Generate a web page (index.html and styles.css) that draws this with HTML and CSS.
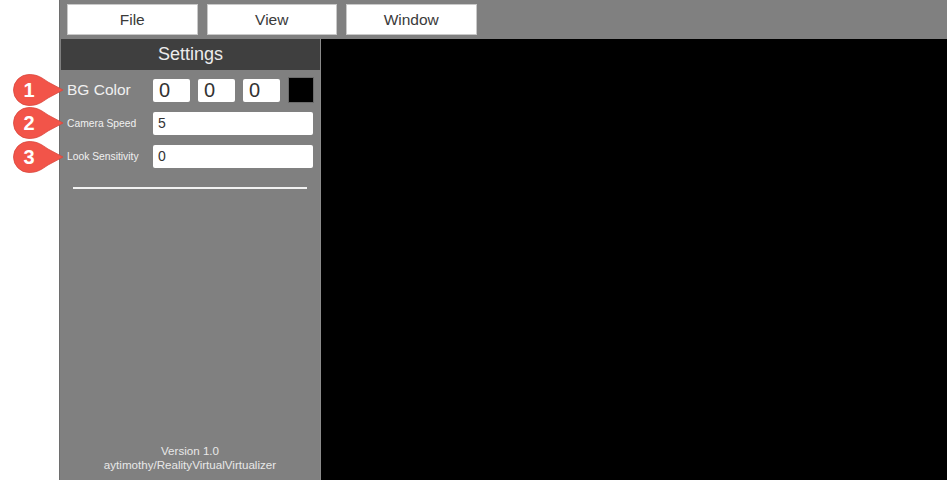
FILE: index.html
```html
<!DOCTYPE html>
<html>
<head>
<meta charset="utf-8">
<link rel="stylesheet" href="styles.css">
</head>
<body>
<div class="app">
  <div class="gutter"></div>
  <div class="main">
    <div class="menubar">
      <div class="menu-btn">File</div>
      <div class="menu-btn">View</div>
      <div class="menu-btn">Window</div>
    </div>
    <div class="content">
      <div class="panel">
        <div class="panel-title">Settings</div>
        <div class="rows">
          <div class="row">
            <div class="label big">BG Color</div>
            <div class="field small">0</div>
            <div class="field small">0</div>
            <div class="field small">0</div>
            <div class="swatch"></div>
          </div>
          <div class="row">
            <div class="label">Camera Speed</div>
            <div class="field wide">5</div>
          </div>
          <div class="row">
            <div class="label">Look Sensitivity</div>
            <div class="field wide">0</div>
          </div>
        </div>
        <div class="divider"></div>
        <div class="spacer"></div>
        <div class="footer">Version 1.0<br>aytimothy/RealityVirtualVirtualizer</div>
      </div>
      <div class="viewport"></div>
    </div>
  </div>
</div>
<div class="callout c1"><svg width="52" height="34" viewBox="0 0 52 34"><path d="M17 1.5 C26 1.5 30 5 36 9 L51 17 L36 25 C30 29 26 32.5 17 32.5 A15.5 15.5 0 0 1 17 1.5 Z" fill="#f25449" stroke="#d9463c" stroke-width="0.8"/></svg><span>1</span></div>
<div class="callout c2"><svg width="52" height="34" viewBox="0 0 52 34"><path d="M17 1.5 C26 1.5 30 5 36 9 L51 17 L36 25 C30 29 26 32.5 17 32.5 A15.5 15.5 0 0 1 17 1.5 Z" fill="#f25449" stroke="#d9463c" stroke-width="0.8"/></svg><span>2</span></div>
<div class="callout c3"><svg width="52" height="34" viewBox="0 0 52 34"><path d="M17 1.5 C26 1.5 30 5 36 9 L51 17 L36 25 C30 29 26 32.5 17 32.5 A15.5 15.5 0 0 1 17 1.5 Z" fill="#f25449" stroke="#d9463c" stroke-width="0.8"/></svg><span>3</span></div>
</body>
</html>
```
FILE: styles.css
```css
html, body {
  margin: 0;
  padding: 0;
  background: #ffffff;
  font-family: "Liberation Sans", Arial, sans-serif;
}
.app {
  display: flex;
  width: 947px;
  height: 480px;
  overflow: hidden;
}
.gutter {
  width: 59px;
  flex: none;
  background: #ffffff;
}
.main {
  flex: 1;
  display: flex;
  flex-direction: column;
  background: #808080;
  border-left: 1px solid #6e6e6e;
}
.menubar {
  height: 39px;
  flex: none;
  display: flex;
  align-items: flex-start;
  gap: 9px;
  padding: 4px 0 0 7px;
  box-sizing: border-box;
}
.menu-btn {
  width: 130.5px;
  height: 31px;
  background: #ffffff;
  border: 1px solid #c9c9c9;
  box-sizing: border-box;
  display: flex;
  align-items: center;
  justify-content: center;
  font-size: 15.5px;
  color: #3a3a3a;
}
.content {
  flex: 1;
  display: flex;
}
.panel {
  width: 260px;
  flex: none;
  display: flex;
  flex-direction: column;
  background: #808080;
}
.panel-title {
  height: 31px;
  margin-left: 1px;
  background: #3f3f3f;
  color: #ececec;
  font-size: 18px;
  display: flex;
  align-items: center;
  justify-content: center;
}
.rows {
  display: flex;
  flex-direction: column;
  padding: 8px 0 0 7px;
  gap: 9px;
}
.row {
  display: flex;
  align-items: center;
  height: 24px;
}
.label {
  width: 86px;
  flex: none;
  color: #f0f0f0;
  font-size: 10.3px;
}
.label.big {
  font-size: 15.5px;
}
.field {
  height: 23px;
  background: #ffffff;
  border-radius: 2px;
  box-sizing: border-box;
  padding-left: 5px;
  display: flex;
  align-items: center;
  color: #333;
  font-size: 14px;
}
.field.small {
  width: 37px;
  margin-right: 8px;
  font-size: 20px;
  padding-left: 6px;
}
.field.wide {
  width: 160px;
}
.swatch {
  width: 26px;
  height: 26px;
  background: #000;
  border: 1px solid #6a6a6a;
  box-sizing: border-box;
}
.divider {
  height: 2px;
  margin: 19px 13px 0 13px;
  background: #f2f2f2;
}
.spacer {
  flex: 1;
}
.footer {
  text-align: center;
  color: #e8e8e8;
  font-size: 11.6px;
  line-height: 14px;
  padding-bottom: 8px;
}
.viewport {
  flex: 1;
  background: #000000;
  border-left: 1px solid #8a8a8a;
}
.callout {
  position: absolute;
  left: 12px;
  width: 52px;
  height: 34px;
}
.callout svg {
  display: block;
}
.callout span {
  position: absolute;
  left: 2px;
  top: 0;
  width: 30px;
  height: 34px;
  display: flex;
  align-items: center;
  justify-content: center;
  color: #ffffff;
  font-weight: bold;
  font-size: 20px;
}
.c1 { top: 73px; }
.c2 { top: 106px; }
.c3 { top: 140px; }
```
